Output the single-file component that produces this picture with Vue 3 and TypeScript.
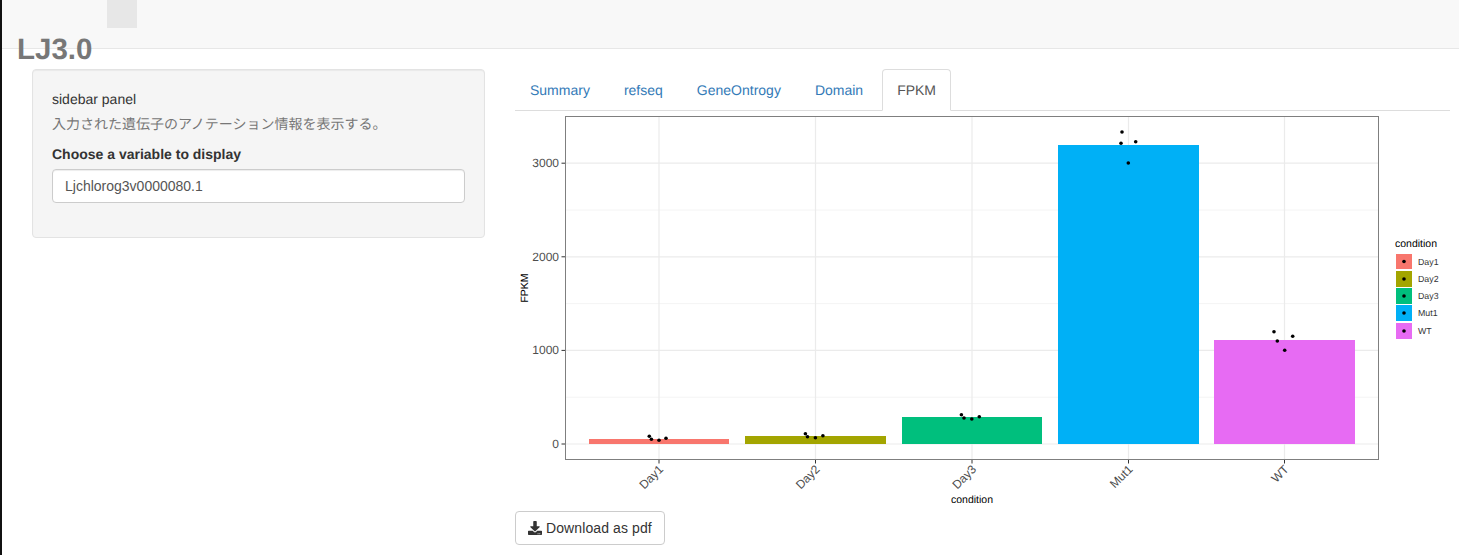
<script setup lang="ts">
interface Bar {
  name: string
  color: string
  x: number
  width: number
  top: number
  center: number
  points: [number, number][]
}

const tabs = ['Summary', 'refseq', 'GeneOntrogy', 'Domain', 'FPKM']

const bars: Bar[] = [
  { name: 'Day1', color: '#f8766d', x: 589, width: 140, top: 439, center: 659, points: [[649.3, 436.3], [651.4, 439.3], [659, 440.3], [666, 438.3]] },
  { name: 'Day2', color: '#a3a500', x: 745, width: 141, top: 436, center: 815.5, points: [[805.4, 433.7], [807.5, 436.7], [815.4, 437.7], [822.9, 435.7]] },
  { name: 'Day3', color: '#00bf7d', x: 902, width: 140, top: 417, center: 972, points: [[961.4, 414.7], [964, 418], [971.8, 419], [979.3, 416.7]] },
  { name: 'Mut1', color: '#00b0f6', x: 1058, width: 141, top: 145, center: 1128.5, points: [[1122, 132], [1121, 143.3], [1135.7, 141.7], [1128.3, 163]] },
  { name: 'WT', color: '#e76bf3', x: 1214, width: 141, top: 340, center: 1284.5, points: [[1274, 331.7], [1277.3, 341], [1292.7, 336.3], [1284.7, 350.3]] }
]

const majorY = [
  { label: '0', y: 444 },
  { label: '1000', y: 350.4 },
  { label: '2000', y: 256.8 },
  { label: '3000', y: 163.2 }
]
const minorY = [397.2, 303.6, 210]

const legendRows = [
  { y: 254, h: 15 },
  { y: 271, h: 16 },
  { y: 288, h: 16 },
  { y: 305, h: 16 },
  { y: 323, h: 16 }
]
</script>

<template>
  <div class="page">
    <nav class="navbar">
      <div class="nav-active"></div>
    </nav>
    <h2 class="title">LJ3.0</h2>

    <div class="content">
      <aside class="well">
        <p class="panel-name">sidebar panel</p>
        <p class="help">入力された遺伝子のアノテーション情報を表示する。</p>
        <label class="field-label" for="gene">Choose a variable to display</label>
        <input id="gene" class="field" type="text" value="Ljchlorog3v0000080.1" />
      </aside>

      <main class="main">
        <ul class="tabs">
          <li v-for="tab in tabs" :key="tab" class="tab" :class="{ active: tab === 'FPKM' }">{{ tab }}</li>
        </ul>

        <svg class="plot" viewBox="515 111 935 394" width="935" height="394">
          <!-- grid -->
          <line v-for="y in minorY" :key="y" x1="566" x2="1378" :y1="y" :y2="y" stroke="#f4f4f4" stroke-width="1" />
          <line v-for="t in majorY" :key="t.label" x1="566" x2="1378" :y1="t.y" :y2="t.y" stroke="#ebebeb" stroke-width="1.2" />
          <line v-for="b in bars" :key="b.name" :x1="b.center" :x2="b.center" y1="117" y2="460" stroke="#ebebeb" stroke-width="1.2" />

          <!-- bars -->
          <rect v-for="b in bars" :key="b.name" :x="b.x" :y="b.top" :width="b.width" :height="444 - b.top" :fill="b.color" />
          <template v-for="b in bars" :key="b.name">
            <circle v-for="(p, i) in b.points" :key="i" :cx="p[0]" :cy="p[1]" r="1.8" fill="#000" />
          </template>

          <rect x="565.5" y="116.5" width="813" height="343" fill="none" stroke="#7f7f7f" stroke-width="1" />

          <!-- y axis -->
          <g v-for="t in majorY" :key="t.label">
            <line x1="561.5" x2="565" :y1="t.y" :y2="t.y" stroke="#333" stroke-width="1" />
            <text x="559" :y="t.y + 4" text-anchor="end" class="tick">{{ t.label }}</text>
          </g>
          <text class="axis-title" transform="translate(528 288) rotate(-90)" text-anchor="middle">FPKM</text>

          <!-- x axis -->
          <g v-for="b in bars" :key="b.name">
            <line :x1="b.center" :x2="b.center" y1="460" y2="463.5" stroke="#333" stroke-width="1" />
            <text class="tick" text-anchor="end" :transform="`translate(${b.center + 5} 470) rotate(-45)`">{{ b.name }}</text>
          </g>
          <text class="axis-title" x="972" y="503" text-anchor="middle">condition</text>

          <!-- legend -->
          <text class="axis-title" x="1395" y="247">condition</text>
          <g v-for="(b, i) in bars" :key="b.name">
            <rect x="1396" :y="legendRows[i].y" width="16" :height="legendRows[i].h" :fill="b.color" />
            <circle cx="1404" :cy="legendRows[i].y + legendRows[i].h / 2" r="1.8" fill="#000" />
            <text class="legend-label" x="1418" :y="legendRows[i].y + legendRows[i].h / 2 + 3">{{ b.name }}</text>
          </g>
        </svg>

        <button class="download" type="button">
          <svg class="download-icon" viewBox="0 0 512 512" width="14" height="14">
            <path fill="currentColor" d="M216 0h80c13.3 0 24 10.7 24 24v168h87.7c17.8 0 26.7 21.5 14.1 34.1L269.7 378.3c-7.5 7.5-19.8 7.5-27.3 0L90.1 226.1c-12.6-12.6-3.7-34.1 14.1-34.1H192V24c0-13.3 10.7-24 24-24zm296 376v112c0 13.3-10.7 24-24 24H24c-13.3 0-24-10.7-24-24V376c0-13.3 10.7-24 24-24h146.7l49 49c20.1 20.1 52.5 20.1 72.6 0l49-49H488c13.3 0 24 10.7 24 24zm-124 88c0-11-9-20-20-20s-20 9-20 20 9 20 20 20 20-9 20-20zm64 0c0-11-9-20-20-20s-20 9-20 20 9 20 20 20 20-9 20-20z" />
          </svg>
          Download as pdf
        </button>
      </main>
    </div>
  </div>
</template>

<style>
html,
body {
  margin: 0;
  background: #fff;
}
</style>

<style scoped>
.page {
  position: relative;
  box-sizing: border-box;
  height: 555px;
  overflow: hidden;
  border-left: 2px solid #111;
  font-family: "Liberation Sans", "Noto Sans CJK JP", sans-serif;
  font-size: 14px;
  line-height: 20px;
  color: #333;
  text-rendering: geometricPrecision;
}

.navbar {
  box-sizing: border-box;
  height: 49px;
  background: #f8f8f8;
  border-bottom: 1px solid #e7e7e7;
}

.nav-active {
  width: 30px;
  height: 28px;
  margin-left: 105px;
  background: #e7e7e7;
}

.title {
  position: absolute;
  left: 15px;
  top: 33px;
  margin: 0;
  font-size: 29.5px;
  line-height: 33px;
  font-weight: 700;
  color: #777;
}

.content {
  display: flex;
  align-items: flex-start;
  padding: 20px 9px 0 30px;
  gap: 30px;
}

.well {
  box-sizing: border-box;
  flex: 0 0 453px;
  height: 169px;
  padding: 19px;
  background: #f5f5f5;
  border: 1px solid #e3e3e3;
  border-radius: 4px;
  box-shadow: inset 0 1px 1px rgba(0, 0, 0, 0.05);
}

.panel-name {
  margin: 0 0 5px;
}

.help {
  margin: 0 0 10px;
  color: #777;
}

.field-label {
  display: block;
  margin-bottom: 5px;
  font-weight: 700;
}

.field {
  display: block;
  box-sizing: border-box;
  width: 100%;
  height: 34px;
  padding: 6px 12px;
  font: inherit;
  color: #555;
  background: #fff;
  border: 1px solid #ccc;
  border-radius: 4px;
  box-shadow: inset 0 1px 1px rgba(0, 0, 0, 0.075);
}

.main {
  flex: 1;
  min-width: 0;
}

.tabs {
  display: flex;
  gap: 4px;
  height: 41px;
  margin: 0;
  padding: 0;
  list-style: none;
  border-bottom: 1px solid #ddd;
}

.tab {
  box-sizing: border-box;
  height: 42px;
  padding: 10px 14px;
  color: #337ab7;
  border: 1px solid transparent;
  border-radius: 4px 4px 0 0;
}

.tab.active {
  color: #555;
  background: #fff;
  border-color: #ddd #ddd #fff;
}

.plot {
  display: block;
  font-family: "Liberation Sans", sans-serif;
}

.tick {
  font-size: 12px;
  fill: #4d4d4d;
}

.axis-title {
  font-size: 10.5px;
  fill: #000;
}

.legend-label {
  font-size: 8.8px;
  fill: #333;
}

.download {
  display: flex;
  align-items: center;
  gap: 4px;
  box-sizing: border-box;
  width: 150px;
  height: 34px;
  margin-top: 6px;
  padding: 6px 12px;
  font: inherit;
  letter-spacing: 0.1px;
  color: #333;
  background: #fff;
  border: 1px solid #ccc;
  border-radius: 4px;
}

.download-icon {
  flex: none;
}
</style>
